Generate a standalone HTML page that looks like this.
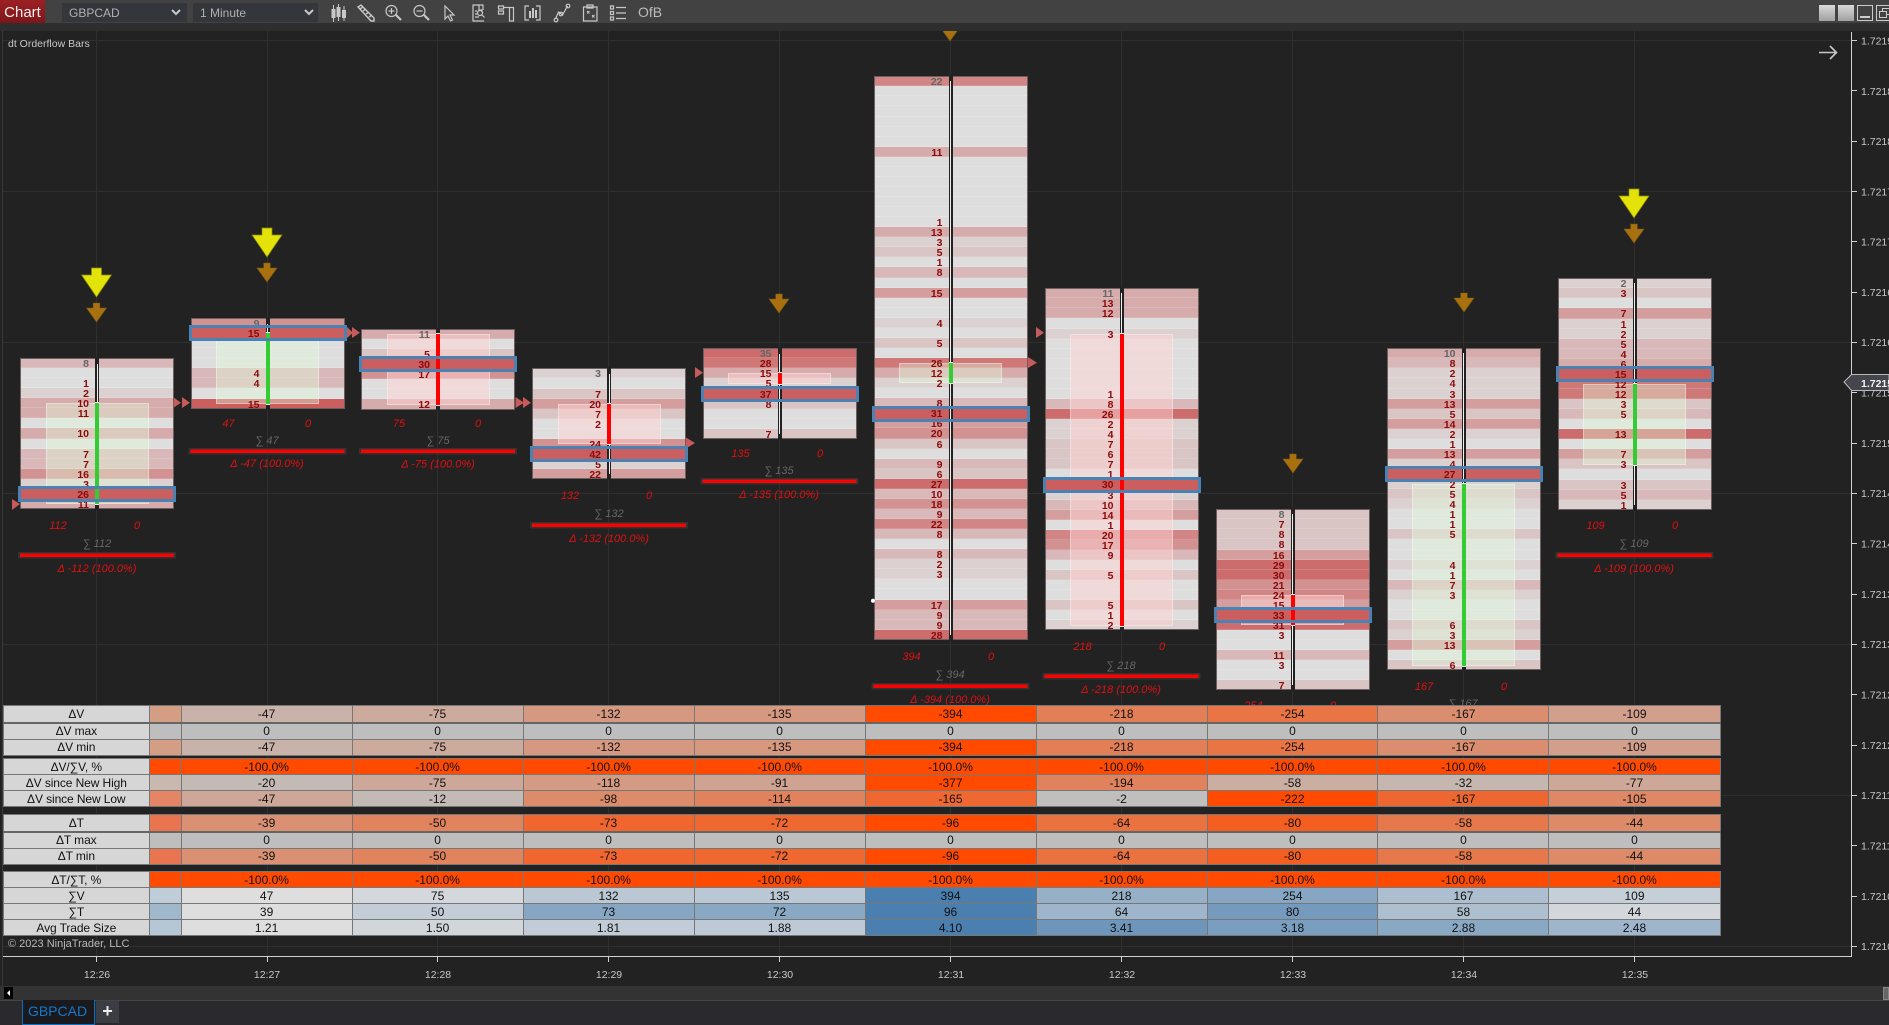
<!DOCTYPE html>
<html><head><meta charset="utf-8"><title>Chart</title>
<style>
html,body{margin:0;padding:0;width:1889px;height:1025px;overflow:hidden;background:#222;font-family:"Liberation Sans",sans-serif}
svg{position:absolute;left:0;top:0}
.b{position:absolute;width:154px;outline:1px solid #6b5f5f;outline-offset:-1px}
.r p{margin:0;height:10.07px;box-sizing:border-box;border-bottom:1px solid rgba(255,255,255,.15)}
.a0{background:#dedede}.a1{background:#dcd1d1}.a2{background:#dac5c5}.a3{background:#d8b8b8}.a4{background:#d6abab}.a5{background:#d49e9e}.a6{background:#d39292}.a7{background:#d18585}.a8{background:#cf7878}.a9{background:#cd6c6c}.a10{background:#cb5f5f}
.o{position:absolute;left:25.5px;width:103px;box-sizing:border-box;border:1px solid rgba(255,255,255,.35)}
.og{background:rgba(226,255,220,.38)}
.op{background:rgba(255,212,212,.5)}
.g{position:absolute;left:75px;width:4px;top:-1px;bottom:-1px;background:#222}
.w{position:absolute;left:76.5px;width:1px;background:#eee}
.c{position:absolute;left:75px;width:4px;box-sizing:content-box;border-top:1px solid #eee;border-bottom:1px solid #eee;margin-top:-1px}
.cg{background:#33cc33}.cr{background:#f00}
.f{position:absolute;left:0;right:0;height:10.07px;background:#cb5f5f}
.p{position:absolute;left:-2px;right:-2px;height:16px;box-sizing:border-box;border:3px solid #4a82b4}
pre{position:absolute;right:85px;top:1px;margin:0;font:bold 10.5px/10.07px "Liberation Sans",sans-serif;color:#8b0a0a;text-align:right}
pre span{color:#666}
table{position:absolute;left:3px;border-collapse:collapse;table-layout:fixed;width:1717.5px;font:12px/14px "Liberation Sans",sans-serif;color:#111;text-align:center;z-index:5}
td{border:1px solid #777;padding:0;height:15px;overflow:hidden;white-space:nowrap}
td.h{background:#d6d6d6;letter-spacing:-.1px}
.n{font:italic 11px "Liberation Sans",sans-serif;fill:#e01010;text-anchor:middle}
.s{font:italic 11px "Liberation Sans",sans-serif;fill:#666;text-anchor:middle}
.q{font:10.5px "Liberation Sans",sans-serif;fill:#c8c8c8}
.t{font:10.5px "Liberation Sans",sans-serif;fill:#c8c8c8;text-anchor:middle}
.top{position:absolute;left:0;top:0;width:1889px;height:31px;background:#2e2e2e;z-index:6}
.bar{position:absolute;left:0;top:0;width:1889px;height:23px;background:#424242}
.chart{position:absolute;left:0;top:0;width:45px;height:23px;background:linear-gradient(#9c2024,#7e1619);color:#eee;font:15px/25px "Liberation Sans",sans-serif;text-align:center}
.dd{position:absolute;top:3px;height:19px;background:#33363b;color:#b0b0b0;font:12px/21px "Liberation Sans",sans-serif;padding-left:7px;box-sizing:border-box}
.ofb{position:absolute;left:638px;top:4px;color:#bbb;font:14px/16px "Liberation Sans",sans-serif}
.win{position:absolute;top:5px;height:16px;box-sizing:border-box}
.foot{position:absolute;left:0;top:986px;width:1889px;height:14px;background:#333;z-index:6}
.tabs{position:absolute;left:0;top:1000px;width:1889px;height:25px;background:#2a2a2e;border-top:1px solid #444;box-sizing:border-box;z-index:6}
.tab{position:absolute;left:22px;top:-1px;width:73px;height:25px;box-sizing:border-box;background:#1a1a1e;border:1px solid #0a70c0;border-top:0;color:#1478c8;font:14px/23px "Liberation Sans",sans-serif;text-align:center;text-indent:-2px}
.plus{position:absolute;left:96px;top:0;width:23px;height:22px;background:#3c3c44;color:#eee;font:bold 18px/21px "Liberation Sans",sans-serif;text-align:center}
.txt{position:absolute;color:#c8c8c8;font:10.5px/13px "Liberation Sans",sans-serif;white-space:nowrap}
</style></head><body>

<svg width="1889" height="1025" viewBox="0 0 1889 1025">
<g stroke="#2f2f2f" stroke-width="1">
<path d="M3 40.5H1852M3 191.5H1852M3 342.5H1852M3 493.5H1852M3 644.5H1852M3 795.5H1852M3 946.5H1852"/>
<path d="M96.5 31V957M267.5 31V957M437.5 31V957M608.5 31V957M779.5 31V957M950.5 31V957M1121.5 31V957M1292.5 31V957M1463.5 31V957M1634.5 31V957"/>
</g>
<path d="M2.5 31V986" stroke="#3a3a3a" fill="none"/>
<path d="M3 956.500H1851.500V32" stroke="#d0d0d0" fill="none"/>
<path d="M96.500 957v5M267.500 957v5M437.500 957v5M608.500 957v5M779.500 957v5M950.500 957v5M1121.500 957v5M1292.500 957v5M1463.500 957v5M1634.500 957v5" stroke="#d0d0d0"/>
<path d="M1852 40.500h5M1852 90.500h5M1852 141.500h5M1852 191.500h5M1852 241.500h5M1852 292.500h5M1852 342.500h5M1852 392.500h5M1852 443.500h5M1852 493.500h5M1852 543.500h5M1852 594.500h5M1852 644.500h5M1852 694.500h5M1852 745.500h5M1852 795.500h5M1852 845.500h5M1852 896.500h5M1852 946.500h5" stroke="#d0d0d0"/>
<g class="q">
<text class="q" x="1861" y="44.5">1.72190</text><text class="q" x="1861" y="95">1.72185</text><text class="q" x="1861" y="145">1.72180</text><text class="q" x="1861" y="195.5">1.72175</text><text class="q" x="1861" y="245.5">1.72170</text><text class="q" x="1861" y="296">1.72165</text><text class="q" x="1861" y="346">1.72160</text><text class="q" x="1861" y="396.5">1.72155</text><text class="q" x="1861" y="447">1.72150</text><text class="q" x="1861" y="497">1.72145</text><text class="q" x="1861" y="547.5">1.72140</text><text class="q" x="1861" y="598">1.72135</text><text class="q" x="1861" y="648">1.72130</text><text class="q" x="1861" y="698.5">1.72125</text><text class="q" x="1861" y="749">1.72120</text><text class="q" x="1861" y="799">1.72115</text><text class="q" x="1861" y="849.5">1.72110</text><text class="q" x="1861" y="900">1.72105</text><text class="q" x="1861" y="950">1.72100</text>
</g>
<polygon points="1844,382 1851.5,374.5 1889,374.5 1889,390.5 1851.5,390.5" fill="#45454d" stroke="#bbb"/>
<text x="1861" y="387" style="font:bold 10.5px 'Liberation Sans',sans-serif;fill:#f2f2f2">1.72153</text>
<text class="t" x="97" y="978">12:26</text><text class="t" x="267" y="978">12:27</text><text class="t" x="438" y="978">12:28</text><text class="t" x="609" y="978">12:29</text><text class="t" x="780" y="978">12:30</text><text class="t" x="951" y="978">12:31</text><text class="t" x="1122" y="978">12:32</text><text class="t" x="1293" y="978">12:33</text><text class="t" x="1464" y="978">12:34</text><text class="t" x="1635" y="978">12:35</text>

<!-- arrow top right -->
<path d="M1819 52.5H1836M1830 46l6.5 6.5-6.5 6.5" stroke="#c8c8c8" stroke-width="1.6" fill="none"/>

<!-- labels under bars -->
<text class="n" x="58" y="529">112</text><text class="n" x="137" y="529">0</text><text class="s" x="97" y="547">∑ 112</text>
<rect x="18" y="552" width="158" height="6.5" fill="#333" rx="1"/><rect x="20" y="553.5" width="154" height="3.5" fill="#f00"/><text class="n" x="97" y="572">Δ -112 (100.0%)</text>
<text class="n" x="228.5" y="427">47</text><text class="n" x="308" y="427">0</text><text class="s" x="267" y="444">∑ 47</text>
<rect x="188.5" y="448" width="158" height="6.5" fill="#333" rx="1"/><rect x="190.5" y="449.5" width="154" height="3.5" fill="#f00"/><text class="n" x="267" y="467">Δ -47 (100.0%)</text>
<text class="n" x="399" y="427">75</text><text class="n" x="478" y="427">0</text><text class="s" x="438" y="444">∑ 75</text>
<rect x="359" y="448" width="158" height="6.5" fill="#333" rx="1"/><rect x="361" y="449.5" width="154" height="3.5" fill="#f00"/><text class="n" x="438" y="467.5">Δ -75 (100.0%)</text>
<text class="n" x="570" y="499">132</text><text class="n" x="649" y="499">0</text><text class="s" x="609" y="517">∑ 132</text>
<rect x="530" y="522" width="158" height="6.5" fill="#333" rx="1"/><rect x="532" y="523.5" width="154" height="3.5" fill="#f00"/><text class="n" x="609" y="542">Δ -132 (100.0%)</text>
<text class="n" x="740.5" y="457">135</text><text class="n" x="820" y="457">0</text><text class="s" x="779" y="474">∑ 135</text>
<rect x="700.5" y="478" width="158" height="6.5" fill="#333" rx="1"/><rect x="702.5" y="479.5" width="154" height="3.5" fill="#f00"/><text class="n" x="779" y="498">Δ -135 (100.0%)</text>
<text class="n" x="911.5" y="660">394</text><text class="n" x="991" y="660">0</text><text class="s" x="950" y="678">∑ 394</text>
<rect x="871.5" y="683" width="158" height="6.5" fill="#333" rx="1"/><rect x="873.5" y="684.5" width="154" height="3.5" fill="#f00"/><text class="n" x="950" y="703">Δ -394 (100.0%)</text>
<text class="n" x="1082.5" y="650">218</text><text class="n" x="1162" y="650">0</text><text class="s" x="1121" y="669">∑ 218</text>
<rect x="1042.5" y="673" width="158" height="6.5" fill="#333" rx="1"/><rect x="1044.5" y="674.5" width="154" height="3.5" fill="#f00"/><text class="n" x="1121" y="693">Δ -218 (100.0%)</text>
<text class="n" x="1253.5" y="709">254</text><text class="n" x="1333" y="709">0</text>
<text class="n" x="1424" y="690">167</text><text class="n" x="1504" y="690">0</text><text class="s" x="1463" y="707">∑ 167</text>
<text class="n" x="1595.5" y="529">109</text><text class="n" x="1675" y="529">0</text><text class="s" x="1634" y="547">∑ 109</text>
<rect x="1555.5" y="552" width="158" height="6.5" fill="#333" rx="1"/><rect x="1557.5" y="553.5" width="154" height="3.5" fill="#f00"/><text class="n" x="1634" y="572">Δ -109 (100.0%)</text>

<!-- yellow arrows -->
<g fill="#e3e30a" stroke="#8a8a00" stroke-width=".7">
<polygon points="91.5,268 101.5,268 101.5,275 111.5,275 96.5,297 81.5,275 91.5,275"/>
<polygon points="262,228 272,228 272,235 282,235 267,257 252,235 262,235"/>
<polygon points="1629,189 1639,189 1639,196 1649,196 1634,218 1619,196 1629,196"/>
</g>
<!-- orange arrows -->
<g fill="#a8700f" stroke="#7a5a10" stroke-width=".6">
<polygon points="93.2,303 99.8,303 99.8,308 106.5,308 96.5,322 86.5,308 93.2,308"/>
<polygon points="263.7,263 270.3,263 270.3,268 277,268 267,282 257,268 263.7,268"/>
<polygon points="775.7,294 782.3,294 782.3,299 789,299 779,313 769,299 775.7,299"/>
<polygon points="946.7,22 953.3,22 953.3,27 960,27 950,41 940,27 946.7,27"/>
<polygon points="1289.7,454 1296.3,454 1296.3,459 1303,459 1293,473 1283,459 1289.7,459"/>
<polygon points="1460.7,293 1467.3,293 1467.3,298 1474,298 1464,312 1454,298 1460.7,298"/>
<polygon points="1630.7,224 1637.3,224 1637.3,229 1644,229 1634,243 1624,229 1630.7,229"/>
</g>
<!-- small triangles -->
<g fill="#c75b5b">
<polygon points="12,499 20,504 12,510"/>
<polygon points="173,397 181,402.7 173,408"/><polygon points="182,397 190,402.7 182,408"/>
<polygon points="347,327 353,332.7 347,338"/><polygon points="352,327 360,332.7 352,338"/>
<polygon points="515.5,397 524,402.7 515.5,408"/><polygon points="523,397 531,402.7 523,408"/>
<polygon points="686,437.5 695,443 686,448.5"/>
<polygon points="695,367 703,372.7 695,378"/>
<polygon points="1028,357 1037,362.7 1028,368"/>
<polygon points="1036,327 1044,332.7 1036,338"/>
</g>
</svg>

<div class="b" style="left:20px;top:358px"><div class="r"><p class="a3"><p class="a0"><p class="a0"><p class="a1"><p class="a4"><p class="a4"><p class="a0"><p class="a4"><p class="a0"><p class="a3"><p class="a3"><p class="a6"><p class="a1"><p class="a10"><p class="a4"></div>
<div class="o og" style="top:45.3px;height:100.7px"></div><div class="f" style="top:130.9px"></div><div class="g"></div><div class="w" style="top:6px;height:140px"></div><div class="c cg" style="top:45.3px;height:100.7px"></div>
<pre><span>8</span>

1
2
10
11

10

7
7
16
3
26
11</pre><div class="p" style="top:127.9px"></div></div>

<div class="b" style="left:190.5px;top:318px"><div class="r"><p class="a6"><p class="a10"><p class="a0"><p class="a0"><p class="a0"><p class="a3"><p class="a3"><p class="a0"><p class="a10"></div>
<div class="o og" style="top:15.1px;height:70.5px"></div><div class="f" style="top:10.07px"></div><div class="g"></div><div class="w" style="top:6px;height:80px"></div><div class="c cg" style="top:15.1px;height:70.5px"></div>
<pre><span>9</span>
15



4
4

15</pre><div class="p" style="top:7.07px"></div></div>

<div class="b" style="left:361px;top:329px"><div class="r"><p class="a4"><p class="a0"><p class="a2"><p class="a10"><p class="a6"><p class="a0"><p class="a0"><p class="a4"></div>
<div class="o op" style="top:5px;height:70.5px"></div><div class="f" style="top:30.2px"></div><div class="g"></div><div class="c cr" style="top:5px;height:70.5px"></div>
<pre><span>11</span>

5
30
17


12</pre><div class="p" style="top:27.2px"></div></div>

<div class="b" style="left:532px;top:368.4px"><div class="r"><p class="a1"><p class="a0"><p class="a2"><p class="a5"><p class="a2"><p class="a0"><p class="a0"><p class="a6"><p class="a10"><p class="a1"><p class="a5"></div>
<div class="o op" style="top:35.2px;height:40.3px"></div><div class="f" style="top:80.6px"></div><div class="g"></div><div class="w" style="top:6px;height:100px"></div><div class="c cr" style="top:35.2px;height:40.3px"></div>
<pre><span>3</span>

7
20
7
2

24
42
5
22</pre><div class="p" style="top:77.6px"></div></div>

<div class="b" style="left:702.5px;top:348.3px"><div class="r"><p class="a9"><p class="a8"><p class="a4"><p class="a1"><p class="a10"><p class="a2"><p class="a0"><p class="a0"><p class="a2"></div>
<div class="o op" style="top:25.2px;height:10.1px"></div><div class="f" style="top:40.3px"></div><div class="g"></div><div class="w" style="top:6px;height:80px"></div><div class="c cr" style="top:25.2px;height:10.1px"></div>
<pre><span>35</span>
28
15
5
37
8


7</pre><div class="p" style="top:37.3px"></div></div>

<div class="b" style="left:873.5px;top:76.3px"><div class="r"><p class="a7"><p class="a0"><p class="a0"><p class="a0"><p class="a0"><p class="a0"><p class="a0"><p class="a4"><p class="a0"><p class="a0"><p class="a0"><p class="a0"><p class="a0"><p class="a0"><p class="a0"><p class="a4"><p class="a1"><p class="a2"><p class="a0"><p class="a3"><p class="a0"><p class="a5"><p class="a0"><p class="a0"><p class="a1"><p class="a0"><p class="a2"><p class="a0"><p class="a8"><p class="a4"><p class="a1"><p class="a0"><p class="a3"><p class="a10"><p class="a5"><p class="a6"><p class="a2"><p class="a0"><p class="a3"><p class="a2"><p class="a9"><p class="a3"><p class="a6"><p class="a3"><p class="a7"><p class="a3"><p class="a0"><p class="a3"><p class="a1"><p class="a1"><p class="a0"><p class="a0"><p class="a5"><p class="a3"><p class="a3"><p class="a9"></div>
<div class="o og" style="top:287px;height:20.1px"></div><div class="f" style="top:332.3px"></div><div class="g"></div><div class="w" style="top:5px;height:554px"></div><div class="c cg" style="top:287px;height:20.1px"></div>
<pre><span>22</span>






11






1
13
3
5
1
8

15


4

5

26
12
2

8
31
16
20
6

9
6
27
10
18
9
22
8

8
2
3


17
9
9
28</pre><div class="p" style="top:329.3px"></div></div>

<div class="b" style="left:1044.5px;top:288.3px"><div class="r"><p class="a4"><p class="a4"><p class="a4"><p class="a0"><p class="a1"><p class="a0"><p class="a0"><p class="a0"><p class="a0"><p class="a0"><p class="a0"><p class="a3"><p class="a9"><p class="a1"><p class="a1"><p class="a2"><p class="a2"><p class="a2"><p class="a0"><p class="a10"><p class="a1"><p class="a3"><p class="a5"><p class="a0"><p class="a7"><p class="a6"><p class="a3"><p class="a0"><p class="a2"><p class="a0"><p class="a0"><p class="a2"><p class="a0"><p class="a1"></div>
<div class="o op" style="top:45.3px;height:292px"></div><div class="f" style="top:191.3px"></div><div class="g"></div><div class="w" style="top:5px;height:332px"></div><div class="c cr" style="top:45.3px;height:292px"></div>
<pre><span>11</span>
13
12

3





1
8
26
2
4
7
6
7
1
30
3
10
14
1
20
17
9

5


5
1
2</pre><div class="p" style="top:188.3px"></div></div>

<div class="b" style="left:1215.5px;top:509.3px"><div class="r"><p class="a2"><p class="a2"><p class="a2"><p class="a2"><p class="a5"><p class="a9"><p class="a9"><p class="a6"><p class="a7"><p class="a5"><p class="a10"><p class="a9"><p class="a0"><p class="a0"><p class="a3"><p class="a0"><p class="a0"><p class="a2"></div>
<div class="o op" style="top:85.6px;height:30.2px"></div><div class="f" style="top:100.7px"></div><div class="g"></div><div class="w" style="top:5px;height:171px"></div><div class="c cr" style="top:85.6px;height:30.2px"></div>
<pre><span>8</span>
7
8
8
16
29
30
21
24
15
33
31
3

11
3

7</pre><div class="p" style="top:97.7px"></div></div>

<div class="b" style="left:1386.5px;top:348.3px"><div class="r"><p class="a4"><p class="a3"><p class="a1"><p class="a1"><p class="a1"><p class="a5"><p class="a2"><p class="a5"><p class="a1"><p class="a0"><p class="a5"><p class="a1"><p class="a10"><p class="a1"><p class="a2"><p class="a1"><p class="a0"><p class="a0"><p class="a2"><p class="a0"><p class="a0"><p class="a1"><p class="a0"><p class="a3"><p class="a1"><p class="a0"><p class="a0"><p class="a2"><p class="a1"><p class="a5"><p class="a0"><p class="a2"></div>
<div class="o og" style="top:136px;height:181.3px"></div><div class="f" style="top:120.8px"></div><div class="g"></div><div class="w" style="top:5px;height:312px"></div><div class="c cg" style="top:136px;height:181.3px"></div>
<pre><span>10</span>
8
2
4
3
13
5
14
2
1
13
4
27
2
5
4
1
1
5


4
1
7
3


6
3
13

6</pre><div class="p" style="top:117.8px"></div></div>

<div class="b" style="left:1557.5px;top:278.3px"><div class="r"><p class="a1"><p class="a2"><p class="a0"><p class="a5"><p class="a1"><p class="a1"><p class="a3"><p class="a3"><p class="a4"><p class="a10"><p class="a8"><p class="a8"><p class="a2"><p class="a3"><p class="a0"><p class="a9"><p class="a0"><p class="a5"><p class="a2"><p class="a0"><p class="a2"><p class="a3"><p class="a1"></div>
<div class="o og" style="top:105.7px;height:80.6px"></div><div class="f" style="top:90.6px"></div><div class="g"></div><div class="w" style="top:5px;height:222px"></div><div class="c cg" style="top:105.7px;height:80.6px"></div>
<pre><span>2</span>
3

7
1
2
5
4
6
15
12
12
3
5

13

7
3

3
5
1</pre><div class="p" style="top:87.6px"></div></div>

<svg width="1889" height="1025" viewBox="0 0 1889 1025" style="z-index:4;pointer-events:none"><circle cx="873" cy="600.7" r="2" fill="#fff"/></svg>

<div class="txt" style="left:8px;top:38px">dt Orderflow Bars</div>

<table style="top:705px"><colgroup><col style="width:145.5px"><col style="width:32px"><col span="9" style="width:170.9px"></colgroup>
<tr style="border-bottom:2px solid #666"><td class="h" style="height:15.5px">ΔV</td><td bgcolor="#d49e85"></td><td bgcolor="#c8b2a9">-47</td><td bgcolor="#ccaa9c">-75</td><td bgcolor="#d59880">-132</td><td bgcolor="#d6987e">-135</td><td bgcolor="#ff4a00">-394</td><td bgcolor="#e37f56">-218</td><td bgcolor="#e97444">-254</td><td bgcolor="#db8e6f">-167</td><td bgcolor="#d19f8b">-109</td></tr>
<tr><td class="h">ΔV max</td><td bgcolor="#bebebe"></td><td bgcolor="#bebebe">0</td><td bgcolor="#bebebe">0</td><td bgcolor="#bebebe">0</td><td bgcolor="#bebebe">0</td><td bgcolor="#bebebe">0</td><td bgcolor="#bebebe">0</td><td bgcolor="#bebebe">0</td><td bgcolor="#bebebe">0</td><td bgcolor="#bebebe">0</td></tr>
<tr><td class="h">ΔV min</td><td bgcolor="#d49e85"></td><td bgcolor="#c8b2a9">-47</td><td bgcolor="#ccaa9c">-75</td><td bgcolor="#d59880">-132</td><td bgcolor="#d6987e">-135</td><td bgcolor="#ff4a00">-394</td><td bgcolor="#e37f56">-218</td><td bgcolor="#e97444">-254</td><td bgcolor="#db8e6f">-167</td><td bgcolor="#d19f8b">-109</td></tr>
</table>

<table style="top:758px"><colgroup><col style="width:145.5px"><col style="width:32px"><col span="9" style="width:170.9px"></colgroup>
<tr><td class="h">ΔV/∑V, %</td><td bgcolor="#ff4a00"></td><td bgcolor="#ff4a00">-100.0%</td><td bgcolor="#ff4a00">-100.0%</td><td bgcolor="#ff4a00">-100.0%</td><td bgcolor="#ff4a00">-100.0%</td><td bgcolor="#ff4a00">-100.0%</td><td bgcolor="#ff4a00">-100.0%</td><td bgcolor="#ff4a00">-100.0%</td><td bgcolor="#ff4a00">-100.0%</td><td bgcolor="#ff4a00">-100.0%</td></tr>
<tr><td class="h">ΔV since New High</td><td bgcolor="#c8b8b0"></td><td bgcolor="#c3bab6">-20</td><td bgcolor="#cda89a">-75</td><td bgcolor="#d49b84">-118</td><td bgcolor="#cfa392">-91</td><td bgcolor="#ff4a00">-377</td><td bgcolor="#e0835d">-194</td><td bgcolor="#caaea2">-58</td><td bgcolor="#c5b6b0">-32</td><td bgcolor="#cda899">-77</td></tr>
<tr><td class="h">ΔV since New Low</td><td bgcolor="#e48565"></td><td bgcolor="#cda797">-47</td><td bgcolor="#c3bab6">-12</td><td bgcolor="#dc8c6b">-98</td><td bgcolor="#e0835d">-114</td><td bgcolor="#ef6831">-165</td><td bgcolor="#c0bfbe">-2</td><td bgcolor="#ff4a00">-222</td><td bgcolor="#ef6730">-167</td><td bgcolor="#de8865">-105</td></tr>
</table>

<table style="top:814px"><colgroup><col style="width:145.5px"><col style="width:32px"><col span="9" style="width:170.9px"></colgroup>
<tr style="border-bottom:2px solid #666"><td class="h" style="height:15.5px">ΔT</td><td bgcolor="#e87550"></td><td bgcolor="#da9072">-39</td><td bgcolor="#e1835c">-50</td><td bgcolor="#f0662e">-73</td><td bgcolor="#ef6830">-72</td><td bgcolor="#ff4a00">-96</td><td bgcolor="#ea7140">-64</td><td bgcolor="#f45e20">-80</td><td bgcolor="#e6794c">-58</td><td bgcolor="#dd8a68">-44</td></tr>
<tr><td class="h">ΔT max</td><td bgcolor="#bebebe"></td><td bgcolor="#bebebe">0</td><td bgcolor="#bebebe">0</td><td bgcolor="#bebebe">0</td><td bgcolor="#bebebe">0</td><td bgcolor="#bebebe">0</td><td bgcolor="#bebebe">0</td><td bgcolor="#bebebe">0</td><td bgcolor="#bebebe">0</td><td bgcolor="#bebebe">0</td></tr>
<tr><td class="h">ΔT min</td><td bgcolor="#e87550"></td><td bgcolor="#da9072">-39</td><td bgcolor="#e1835c">-50</td><td bgcolor="#f0662e">-73</td><td bgcolor="#ef6830">-72</td><td bgcolor="#ff4a00">-96</td><td bgcolor="#ea7140">-64</td><td bgcolor="#f45e20">-80</td><td bgcolor="#e6794c">-58</td><td bgcolor="#dd8a68">-44</td></tr>
</table>

<table style="top:871px"><colgroup><col style="width:145.5px"><col style="width:32px"><col span="9" style="width:170.9px"></colgroup>
<tr><td class="h">ΔT/∑T, %</td><td bgcolor="#ff4a00"></td><td bgcolor="#ff4a00">-100.0%</td><td bgcolor="#ff4a00">-100.0%</td><td bgcolor="#ff4a00">-100.0%</td><td bgcolor="#ff4a00">-100.0%</td><td bgcolor="#ff4a00">-100.0%</td><td bgcolor="#ff4a00">-100.0%</td><td bgcolor="#ff4a00">-100.0%</td><td bgcolor="#ff4a00">-100.0%</td><td bgcolor="#ff4a00">-100.0%</td></tr>
<tr><td class="h">∑V</td><td bgcolor="#bfcdd8"></td><td bgcolor="#dedede">47</td><td bgcolor="#d4d8dc">75</td><td bgcolor="#bbc8d4">132</td><td bgcolor="#bac7d4">135</td><td bgcolor="#4a7fb0">394</td><td bgcolor="#96b0c8">218</td><td bgcolor="#86a6c3">254</td><td bgcolor="#acbecf">167</td><td bgcolor="#c5cfd7">109</td></tr>
<tr><td class="h">∑T</td><td bgcolor="#a0b8cc"></td><td bgcolor="#dedede">39</td><td bgcolor="#c3cdd7">50</td><td bgcolor="#87a6c3">73</td><td bgcolor="#89a8c4">72</td><td bgcolor="#4a7fb0">96</td><td bgcolor="#9eb5cb">64</td><td bgcolor="#749abd">80</td><td bgcolor="#aec0d0">58</td><td bgcolor="#d3d7dc">44</td></tr>
<tr><td class="h">Avg Trade Size</td><td bgcolor="#b5c6d6"></td><td bgcolor="#dedede">1.21</td><td bgcolor="#d1d6db">1.50</td><td bgcolor="#c1ccd6">1.81</td><td bgcolor="#bdc9d5">1.88</td><td bgcolor="#4a7fb0">4.10</td><td bgcolor="#6e96bb">3.41</td><td bgcolor="#7a9ebf">3.18</td><td bgcolor="#89a8c4">2.88</td><td bgcolor="#9eb5cb">2.48</td></tr>
</table>

<div class="txt" style="left:8px;top:938px;font-size:11px;color:#b8b8b8">© 2023 NinjaTrader, LLC</div>

<div class="top"><div class="bar">
<div class="chart">Chart</div>
<div class="dd" style="left:62px;width:125px">GBPCAD</div>
<div class="dd" style="left:193px;width:125px">1 Minute</div>
<div class="ofb">OfB</div>
<svg width="1889" height="31" viewBox="0 0 1889 31" fill="none" stroke="#c8c8c8" stroke-width="1.2">
<path d="M172 10l4 4 4-4M305 10l4 4 4-4" stroke-width="2"/>
<path d="M333.5 5v17M338.5 4v17M344 6v15" stroke-width="1"/>
<path d="M331.5 9h4v9h-4zM336.500 7h4v10h-4zM342 10h4v8h-4z" fill="#c8c8c8" stroke="none"/>
<path d="M358 7l3-2 13 13v3h-3zM360 9l3-2M363 11l3-2M366 14l3-2M369 17l3-2" stroke-width="1.400"/>
<circle cx="391.5" cy="11" r="5.5"/><path d="M396 15l5 5" stroke-width="2.2"/><path d="M388.5 11h6M391.5 8v6"/>
<circle cx="419.5" cy="11" r="5.5"/><path d="M424 15l5 5" stroke-width="2.2"/><path d="M416.5 11h6"/>
<path d="M445 6v13l3-3 2.500 5 2-1-2.500-5h4z"/>
<path d="M483 10V5h-10v16h11M479 5v5h4"/><circle cx="480" cy="13" r="2.500"/><path d="M482 15l2.500 2.500M475 11h2M475 14h2M475 17h4"/>
<path d="M498.500 6h5v3h-5zM498.500 11h5v3h-5zM503.500 7.500h10V21h-4V7.500"/>
<path d="M529 6h-4v14h4M536 6h4v14h-4"/><path d="M529 11h2v7h-2zM532 8h2v10h-2zM535 10h2v8h-2z" fill="#c8c8c8" stroke="none"/>
<path d="M555.500 19l3-7 4 3 5-9" /><circle cx="556" cy="20" r="1.800"/><circle cx="561" cy="14" r="1.800"/><circle cx="568" cy="6" r="1.800"/>
<path d="M583.500 7h13.500v14h-13.500zM587 5h6v3h-6z"/><path d="M587 11l2.500 2.500M589.500 11l-2.500 2.500M592 15l2.500 2.500M594.500 15l-2.500 2.500" stroke-width="1"/>
<path d="M610.500 6h3v3h-3zM610.500 11.500h3v3h-3zM610.500 17h3v3h-3zM616 7.500h10M616 13h10M616 18.500h10"/>
</svg>
<div class="win" style="left:1819px;width:16px;background:linear-gradient(#d8d8d8,#a0a0a0)"></div>
<div class="win" style="left:1838px;width:16px;background:linear-gradient(#d8d8d8,#a0a0a0)"></div>
<div class="win" style="left:1857px;width:16px;border:1px solid #ccc"><div style="position:absolute;left:2px;bottom:2px;width:10px;height:2px;background:#ccc"></div></div>
<div class="win" style="left:1876px;width:16px;border:1px solid #ccc"><div style="position:absolute;left:5px;top:2px;width:7px;height:5px;border:1.500px solid #ccc"></div><div style="position:absolute;left:2px;top:5px;width:6px;height:5px;border:1.500px solid #ccc;background:#444"></div></div>
</div></div>

<div class="foot">
<div style="position:absolute;left:4px;top:1px;width:9px;height:12px;background:#000"></div>
<div style="position:absolute;left:7px;top:4px;width:0;height:0;border-top:3px solid transparent;border-bottom:3px solid transparent;border-right:3px solid #fff"></div>
<div style="position:absolute;left:1883px;top:1px;width:6px;height:13px;background:#666;border:1px solid #888;box-sizing:border-box"></div>
</div>
<div class="tabs"><div class="tab">GBPCAD</div><div class="plus">+</div></div>
</body></html>
